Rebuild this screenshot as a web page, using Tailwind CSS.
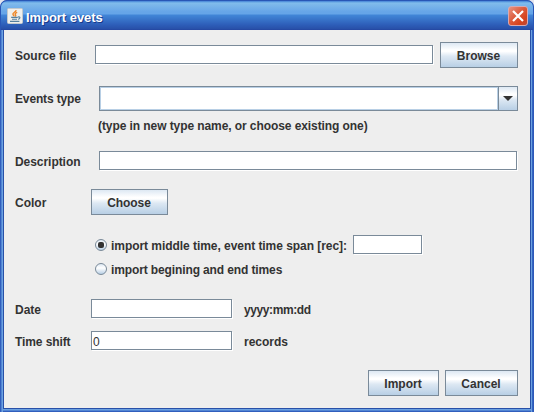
<!DOCTYPE html>
<html lang="en">
<head>
<meta charset="utf-8">
<title>Import evets</title>
<script src="https://cdn.jsdelivr.net/npm/@tailwindcss/browser@4"></script>
</head>
<body class="w-[534px] h-[412px] overflow-hidden bg-[#e4e4ec] font-['Liberation_Sans',sans-serif] text-[12px] font-bold leading-[14px] text-[#333333]">
<div class="w-[534px] h-[412px] flex flex-col rounded-t-[7px] overflow-hidden bg-[linear-gradient(90deg,#2854b4_0px,#3969c6_1px,#6ba1e0_2px,#6ba1e0_3px,#2850a8_3px,#2850a8_4px,#2850a8_530px,#2850a8_531px,#6ba1e0_531px,#6ba1e0_532px,#3969c6_532px,#2854b4_534px)]">
  <header class="h-[30px] shrink-0 flex items-center pl-[7px] pr-[7px] pt-[2px] rounded-t-[7px] border border-b-0 border-[#2856b6] bg-[linear-gradient(180deg,#4381d6_0px,#80bdec_2px,#7bb6ea_4px,#66a5e8_11px,#66a5e8_13px,#4186d8_14px,#3b7ace_17px,#2d5db8_24px,#2850a8_28px,#2343a0_29px)]">
    <svg class="w-[16px] h-[16px] -ml-px -mt-px shrink-0" viewBox="0 0 16 16">
      <rect x=".5" y=".5" width="15" height="15" rx="1" fill="#f0efec" stroke="#c3c9cc"/>
      <path d="M9 2.2C9.4 4.2 5.2 4.4 6 6.4c.3.8 1.2 1.1 1 2M10.2 4.4C7.7 5.3 7.8 6.1 8.6 7c.4.5 0 1.1-.5 1.5" fill="none" stroke="#ee8626" stroke-width="1.4"/>
      <path d="M4.2 9.4h6.6M5 11.2h5M3 13.4h9.4M11 9c3-.6 2 1.9 0 2.2" fill="none" stroke="#557f9d" stroke-width="1.1"/>
    </svg>
    <h1 class="ml-[3px] pt-[2px] text-[13px] leading-[16px] tracking-[-0.05px] text-white [text-shadow:1px_1px_0_#183a8c]">Import evets</h1>
    <div class="ml-auto w-[20px] h-[20px] rounded-[3px] border border-[#d8a9b0] bg-[linear-gradient(135deg,#e99483_0%,#dc5b3c_45%,#d6421c_75%,#b94a39_100%)] flex items-center justify-center mr-[-2px] -mt-px">
      <svg class="w-[12px] h-[12px]" viewBox="0 0 12 12"><path d="M1 1l10 10M11 1L1 11" stroke="#fff" stroke-width="2.2"/></svg>
    </div>
  </header>
  <main class="mx-[4px] h-[378px] shrink-0 bg-[#eeeeee] flex flex-col pl-[11px] pr-[12px] pt-[12px]">
    <div class="flex h-[26px] shrink-0 items-center">
      <span class="w-[80px] pt-[2px]">Source file</span>
      <div class="mb-px w-[338px] h-[19px] bg-white border border-[#7a8a99] shadow-[1px_1px_0_#fff]"></div>
      <div class="ml-[7px] w-[78px] h-[26px] border border-[#7a8a99] bg-[linear-gradient(180deg,#dde8f3_0%,#ffffff_30%,#ffffff_35%,#dde8f3_55%,#b8cfe5_100%)] flex items-center justify-center pt-[2px] pr-px">Browse</div>
    </div>
    <div class="mt-[18px] flex h-[25px] shrink-0 items-center">
      <span class="w-[84px] tracking-[-0.15px]">Events type</span>
      <div class="w-[419px] h-[25px] border border-[#7a8a99] flex">
        <div class="w-[398px] bg-white border border-[#b8cfe5]"></div>
        <div class="w-[19px] border-l border-[#7a8a99] bg-[linear-gradient(180deg,#dde8f3_0%,#ffffff_30%,#ffffff_35%,#dde8f3_55%,#b8cfe5_100%)] flex items-center justify-center">
          <svg class="w-[10px] h-[5px]" viewBox="0 0 10 5"><path d="M0 0h10L5 5z" fill="#333"/></svg>
        </div>
      </div>
    </div>
    <p class="mt-[8px] h-[14px] ml-[83px] tracking-[-0.08px]">(type in new type name, or choose existing one)</p>
    <div class="mt-[18px] flex h-[19px] shrink-0 items-center">
      <span class="w-[84px] pt-[2px] tracking-[-0.05px]">Description</span>
      <div class="w-[418px] h-[19px] bg-white border border-[#7a8a99] shadow-[1px_1px_0_#fff]"></div>
    </div>
    <div class="mt-[19px] flex h-[26px] shrink-0 items-center">
      <span class="w-[76px] pt-[2px]">Color</span>
      <div class="w-[77px] h-[26px] border border-[#7a8a99] bg-[linear-gradient(180deg,#dde8f3_0%,#ffffff_30%,#ffffff_35%,#dde8f3_55%,#b8cfe5_100%)] flex items-center justify-center pt-[2px] pr-px tracking-[-0.1px]">Choose</div>
    </div>
    <div class="mt-[20px] ml-[80px] flex h-[19px] shrink-0 items-center">
      <div class="w-[12px] h-[12px] mt-px rounded-full border border-[#7a8a99] bg-[linear-gradient(180deg,#dde8f3,#ffffff_40%,#b8cfe5)] flex items-center justify-center"><i class="w-[6px] h-[6px] rounded-[2px] bg-[#333]"></i></div>
      <span class="ml-[4px] w-[242px] pt-[3px] whitespace-nowrap tracking-[-0.05px]">import middle time, event time span [rec]:</span>
      <div class="w-[69px] h-[19px] bg-white border border-[#7a8a99] shadow-[1px_1px_0_#fff]"></div>
    </div>
    <div class="mt-[8px] ml-[80px] flex h-[14px] shrink-0 items-center">
      <div class="w-[12px] h-[12px] rounded-full border border-[#7a8a99] bg-[linear-gradient(180deg,#dde8f3,#ffffff_40%,#b8cfe5)]"></div>
      <span class="ml-[4px] pt-[2px] tracking-[-0.12px]">import begining and end times</span>
    </div>
    <div class="mt-[23px] flex h-[19px] shrink-0 items-center">
      <span class="w-[76px] pt-[2px]">Date</span>
      <div class="w-[141px] h-[19px] bg-white border border-[#7a8a99] shadow-[1px_1px_0_#fff]"></div>
      <span class="ml-[12px] pt-[2px] tracking-[-0.4px]">yyyy:mm:dd</span>
    </div>
    <div class="mt-[13px] flex h-[19px] shrink-0 items-center">
      <span class="w-[76px] pt-[2px] tracking-[-0.1px]">Time shift</span>
      <div class="w-[141px] h-[19px] bg-white border border-[#7a8a99] shadow-[1px_1px_0_#fff] font-normal pl-[1px] pt-[3px]">0</div>
      <span class="ml-[12px] pt-[2px]">records</span>
    </div>
    <div class="mt-[20px] flex h-[26px] shrink-0 justify-end gap-[6px]">
      <div class="w-[71px] h-[26px] border border-[#7a8a99] bg-[linear-gradient(180deg,#dde8f3_0%,#ffffff_30%,#ffffff_35%,#dde8f3_55%,#b8cfe5_100%)] flex items-center justify-center pt-[2px] pr-px">Import</div>
      <div class="w-[73px] h-[26px] border border-[#7a8a99] bg-[linear-gradient(180deg,#dde8f3_0%,#ffffff_30%,#ffffff_35%,#dde8f3_55%,#b8cfe5_100%)] flex items-center justify-center pt-[2px] pr-px">Cancel</div>
    </div>
  </main>
  <footer class="h-[4px] shrink-0 mx-[3px] bg-[linear-gradient(180deg,#2850a8_0px,#2850a8_1px,#6ba1e0_1px,#6ba1e0_2px,#3969c6_3px,#2854b4_4px)]"></footer>
</div>
</body>
</html>
